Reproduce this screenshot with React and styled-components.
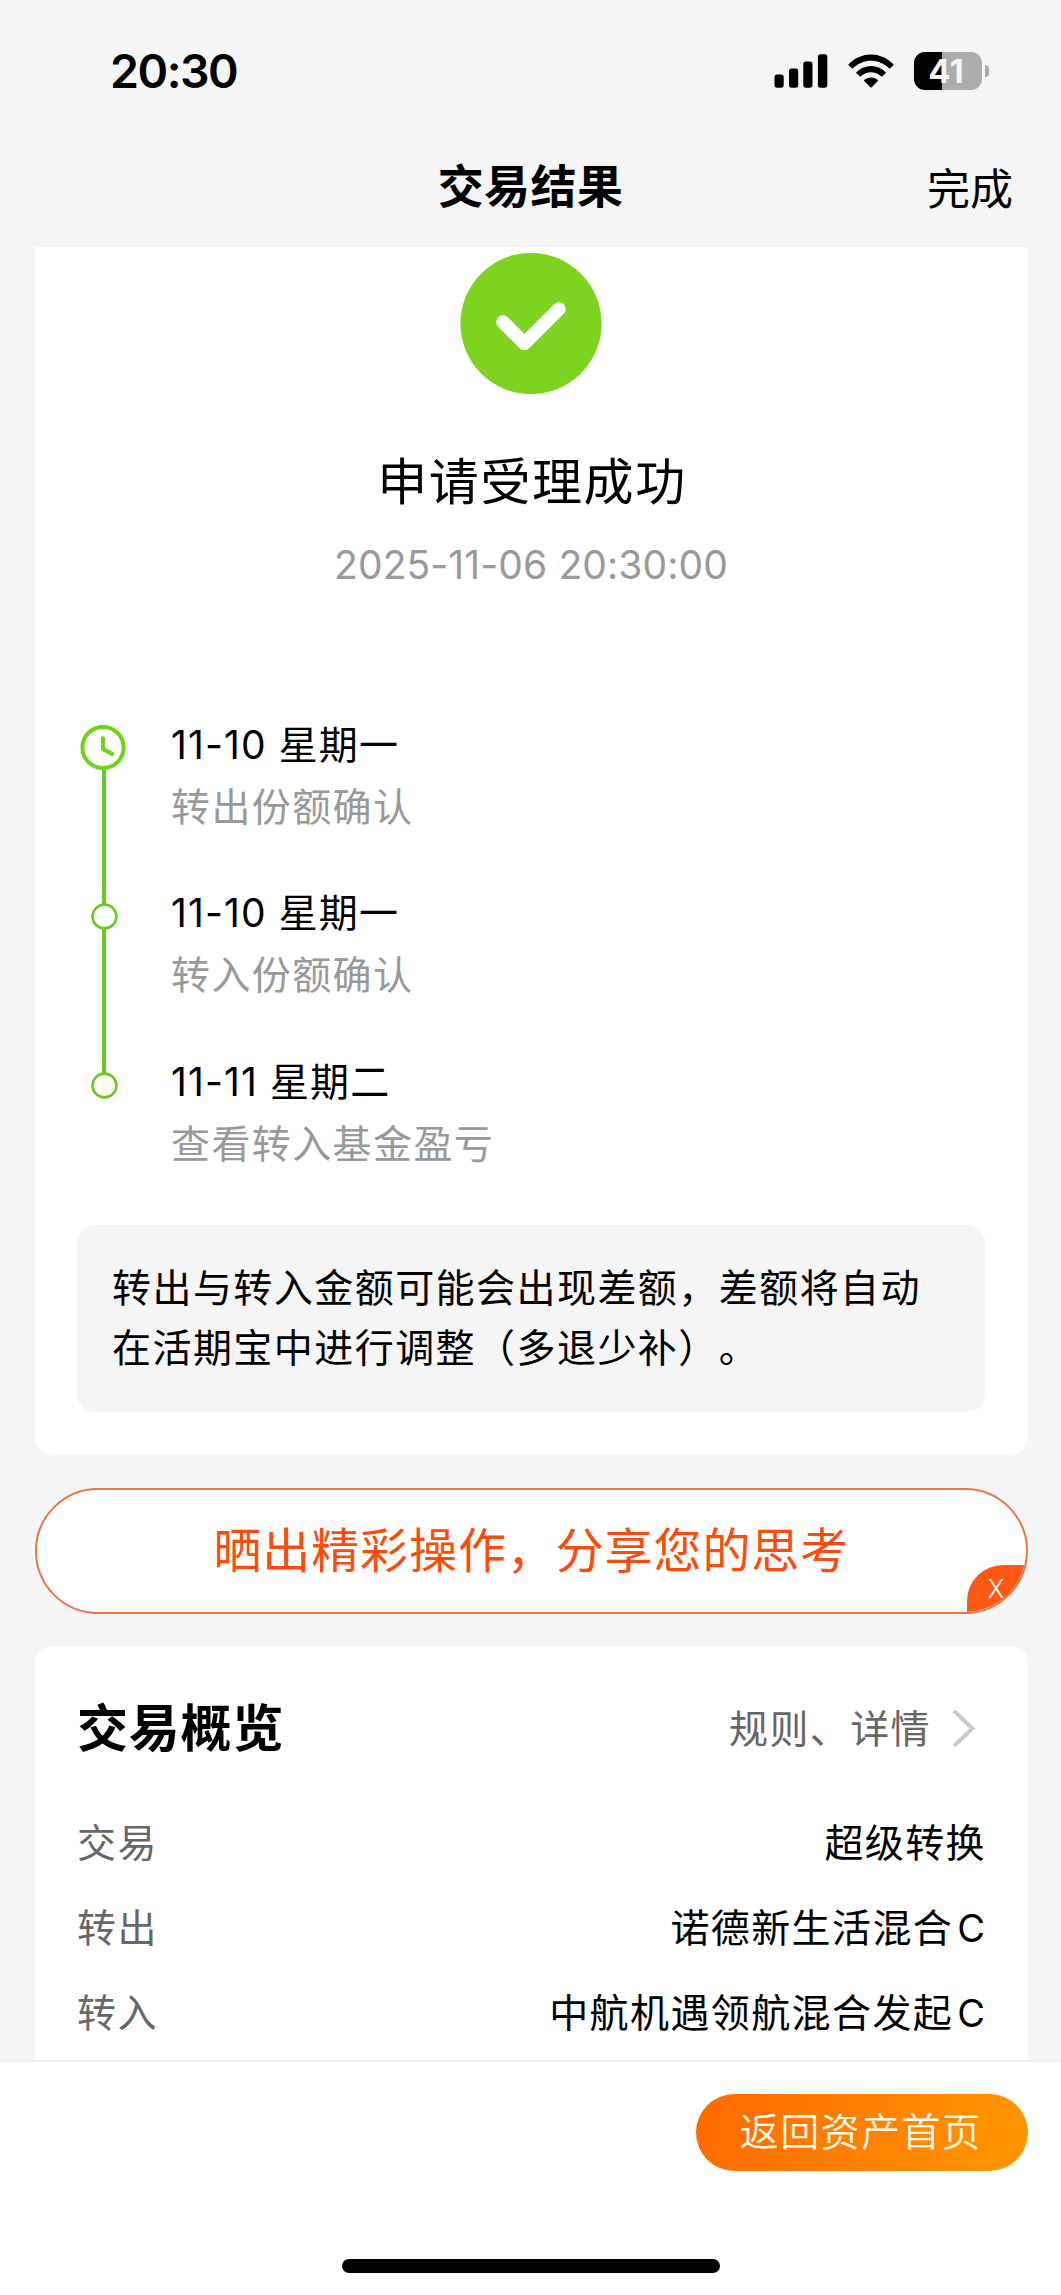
import React from 'react'
import styled, { createGlobalStyle } from 'styled-components'

const steps = [
  { date: '11-10 星期一', text: '转出份额确认', current: true },
  { date: '11-10 星期一', text: '转入份额确认' },
  { date: '11-11 星期二', text: '查看转入基金盈亏' },
];

const details = [
  { label: '交易', value: '超级转换' },
  { label: '转出', value: '诺德新生活混合', suffix: 'C' },
  { label: '转入', value: '中航机遇领航混合发起', suffix: 'C' },
];

const GlobalStyle = createGlobalStyle`
  * {
    box-sizing: border-box;
  }

  body {
    margin: 0;
    background: #f5f5f5;
    color: #000;
    font-family: Inter, "Noto Sans CJK SC", sans-serif;
    font-size: 39px;
    letter-spacing: 1.4px;
    text-spacing-trim: space-all;
    white-space: nowrap;
  }

  svg {
    display: block;
  }

  h1, h2, p {
    margin: 0;
  }
`;

function SignalIcon() {
  return (
    <svg width="54" height="34" viewBox="0 0 54 34">
      <rect x="0.5" y="20.5" width="9.2" height="13.2" rx="2.6" />
      <rect x="15" y="14.5" width="9.2" height="19.2" rx="2.6" />
      <rect x="29.3" y="7.5" width="9.2" height="26.2" rx="2.6" />
      <rect x="43.9" y="0.3" width="9.4" height="33.4" rx="2.6" />
    </svg>
  );
}

function WifiIcon() {
  return (
    <svg width="46" height="34" viewBox="0 0 46 34">
      <path d="M0.6 10.2C13 -2.9 33 -2.9 45.4 10.2Q45.8 10.7 45.4 11.2L42.2 14.3Q41.6 14.8 41 14.3C31 4.3 15 4.3 5 14.3Q4.4 14.8 3.8 14.3L0.6 11.2Q0.2 10.7 0.6 10.2Z" />
      <path d="M8.4 18.2C16.6 9.9 29.4 9.9 37.6 18.2Q38 18.7 37.6 19.2L34.3 22.3Q33.7 22.8 33.1 22.3C27.4 16.9 18.6 16.9 12.9 22.3Q12.3 22.8 11.7 22.3L8.4 19.2Q8 18.7 8.4 18.2Z" />
      <path d="M16.2 26.1C20 22.5 26 22.5 29.8 26.1Q30.2 26.6 29.8 27.1L23.7 33.2Q23 33.8 22.3 33.2L16.2 27.1Q15.8 26.6 16.2 26.1Z" />
    </svg>
  );
}

function CheckIcon() {
  return (
    <svg width="142" height="142" viewBox="0 0 142 142">
      <circle cx="71" cy="70.6" r="70.6" fill="#7ed321" />
      <path d="M43 69L64.4 90.4L99 56" fill="none" stroke="#fff" strokeWidth="13.4" strokeLinecap="round" strokeLinejoin="round" />
    </svg>
  );
}

function ClockIcon() {
  return (
    <svg width="46" height="46" viewBox="0 0 46 46">
      <circle cx="23" cy="22.5" r="20.6" fill="#fff" stroke="#6fd414" strokeWidth="4" />
      <path d="M23 13.3V24.1L32.2 28.9" fill="none" stroke="#6fd414" strokeWidth="4.2" strokeLinecap="round" strokeLinejoin="round" />
    </svg>
  );
}

function DotIcon() {
  return (
    <svg width="27" height="27" viewBox="0 0 27 27">
      <circle cx="13.5" cy="13.5" r="11.9" fill="#fff" stroke="#67ca1c" strokeWidth="2.6" />
    </svg>
  );
}

function App() {
  return (
    <Screen>
      <GlobalStyle />
      <StatusBar>
        <Time>20:30</Time>
        <StatusIcons>
          <SignalIcon />
          <WifiIcon />
          <Battery>
            <BatteryBody>41</BatteryBody>
            <BatteryTip />
          </Battery>
        </StatusIcons>
      </StatusBar>
      <NavBar>
        <span />
        <NavTitle>交易结果</NavTitle>
        <NavAction>完成</NavAction>
      </NavBar>

      <Content>
        <ResultCard>
          <CheckIcon />
          <ResultTitle>申请受理成功</ResultTitle>
          <ResultTime>2025-11-06 20:30:00</ResultTime>
          <Timeline>
            {steps.map((step, i) => (
              <Step key={i}>
                <Rail $current={step.current}>
                  {step.current ? <ClockIcon /> : <DotIcon />}
                  {i < steps.length - 1 && <Line />}
                </Rail>
                <StepBody>
                  <StepDate>{step.date}</StepDate>
                  <StepText>{step.text}</StepText>
                </StepBody>
              </Step>
            ))}
          </Timeline>
          <Notice>
            转出与转入金额可能会出现差额，差额将自动
            <br />
            在活期宝中进行调整（多退少补）。
          </Notice>
        </ResultCard>

        <ShareButton>
          晒出精彩操作，分享您的思考
          <CloseCorner>X</CloseCorner>
        </ShareButton>

        <OverviewCard>
          <OverviewHead>
            <OverviewTitle>交易概览</OverviewTitle>
            <RulesLink>
              规则、详情
              <svg width="24" height="42" viewBox="0 0 24 42">
                <path d="M2 6L20.5 23.5L2 41" fill="none" stroke="#cbcbcb" strokeWidth="4" />
              </svg>
            </RulesLink>
          </OverviewHead>
          {details.map((row) => (
            <DetailRow key={row.label}>
              <DetailLabel>{row.label}</DetailLabel>
              <DetailValue>
                {row.value}
                {row.suffix && <Suffix>{row.suffix}</Suffix>}
              </DetailValue>
            </DetailRow>
          ))}
        </OverviewCard>
      </Content>

      <BottomBar>
        <HomeButton>返回资产首页</HomeButton>
        <HomeIndicator />
      </BottomBar>
    </Screen>
  );
}

const Screen = styled.div`
  display: flex;
  flex-direction: column;
  width: 1061px;
  height: 2295px;
  overflow: hidden;
`;

const StatusBar = styled.div`
  display: flex;
  justify-content: space-between;
  align-items: center;
  height: 141px;
  padding: 0 72px 0 110px;
`;

const Time = styled.span`
  font-size: 46.5px;
  font-weight: 600;
  letter-spacing: -1.5px;
`;

const StatusIcons = styled.div`
  display: flex;
  align-items: center;
  gap: 20px;
`;

const Battery = styled.div`
  display: flex;
  align-items: center;
  gap: 3px;
`;

const BatteryBody = styled.span`
  width: 68px;
  height: 38px;
  padding-right: 4px;
  border-radius: 11px;
  background: linear-gradient(90deg, #000 28px, #acacac 28px);
  color: #f5f5f5;
  font-size: 33px;
  font-weight: 700;
  letter-spacing: 0;
  line-height: 38px;
  text-align: center;
`;

const BatteryTip = styled.span`
  width: 4px;
  height: 12px;
  border-radius: 0 6px 6px 0;
  background: #acacac;
`;

const NavBar = styled.div`
  display: grid;
  grid-template-columns: 1fr auto 1fr;
  align-items: center;
  height: 106px;
  padding: 0 48px 16px;
`;

const NavTitle = styled.h1`
  font-size: 46px;
  font-weight: 700;
  letter-spacing: 0.4px;
  line-height: 60px;
`;

const NavAction = styled.span`
  justify-self: end;
  padding-top: 5px;
  font-size: 43px;
  letter-spacing: 0;
  line-height: 60px;
`;

const Content = styled.main`
  display: flex;
  flex-direction: column;
  height: 1813px;
  padding: 0 33px 0 34.5px;
  overflow: hidden;
`;

const ResultCard = styled.section`
  display: flex;
  flex-direction: column;
  align-items: center;
  flex: none;
  height: 1208px;
  padding: 6px 43px 0 42.5px;
  border-radius: 0 0 17px 17px;
  background: #fff;
`;

const ResultTitle = styled.h2`
  margin-top: 51px;
  padding-left: 2px;
  font-size: 50px;
  font-weight: 400;
  letter-spacing: 1.6px;
  line-height: 72px;
`;

const ResultTime = styled.p`
  margin-top: 17px;
  color: #999;
  font-size: 39px;
  letter-spacing: 0.1px;
  line-height: 60px;
`;

const Timeline = styled.div`
  align-self: stretch;
  height: 500px;
  margin-top: 130px;
`;

const Step = styled.div`
  display: flex;
  height: 168.4px;
`;

const Rail = styled.div`
  display: flex;
  flex-direction: column;
  align-items: center;
  width: 54px;

  svg {
    flex: none;
    margin: ${(props) => (props.$current ? '0 3px 0 0' : '10px 0 0 1px')};
  }
`;

const Line = styled.span`
  flex: 1;
  width: 4px;
  margin-top: -1px;
  margin-bottom: -11px;
  background: #67ca1c;
`;

const StepBody = styled.div`
  margin-left: 40px;
`;

const StepDate = styled.p`
  margin-top: -10px;
  letter-spacing: 1.1px;
  line-height: 60px;
`;

const StepText = styled.p`
  margin-top: 2px;
  color: #999;
  line-height: 60px;
`;

const Notice = styled.div`
  align-self: stretch;
  height: 187px;
  padding: 33px 35px;
  border-radius: 18px;
  background: #f5f5f5;
  letter-spacing: 1.45px;
  line-height: 60px;
`;

const ShareButton = styled.div`
  position: relative;
  flex: none;
  height: 126px;
  margin-top: 33px;
  border: 2px solid #ec7446;
  border-radius: 63px;
  background: #fff;
  color: #fc4c0c;
  font-size: 48px;
  letter-spacing: 0.9px;
  line-height: 122px;
  text-align: center;
  overflow: hidden;
`;

const CloseCorner = styled.span`
  position: absolute;
  right: -2px;
  bottom: -2px;
  width: 61px;
  height: 49px;
  padding-right: 3px;
  border-top-left-radius: 36px;
  background: #fc5a14;
  color: #fff;
  font-size: 25px;
  font-weight: 300;
  letter-spacing: 0;
  line-height: 49px;
`;

const OverviewCard = styled.section`
  flex: none;
  height: 440px;
  margin-top: 32px;
  padding: 38px 43px 0 42.5px;
  border-radius: 17px;
  background: #fff;
`;

const OverviewHead = styled.div`
  display: flex;
  justify-content: space-between;
  align-items: center;
  height: 84px;
  margin-bottom: 29px;
`;

const OverviewTitle = styled.h2`
  margin-top: -2px;
  font-size: 51px;
  font-weight: 700;
  letter-spacing: 0.8px;
`;

const RulesLink = styled.span`
  display: flex;
  align-items: center;
  gap: 21px;
  padding-right: 9px;
  color: #666;
`;

const DetailRow = styled.div`
  display: flex;
  justify-content: space-between;
  align-items: center;
  height: 85.3px;
`;

const DetailLabel = styled.span`
  color: #666;
`;

const DetailValue = styled.span`
  margin-right: -1px;
`;

const Suffix = styled.span`
  margin-left: 4px;
  margin-right: 1px;
  font-size: 38px;
  letter-spacing: 0;
`;

const BottomBar = styled.footer`
  display: flex;
  flex-direction: column;
  align-items: center;
  height: 235px;
  padding: 32px 33px 0;
  border-top: 2px solid #f0f0f0;
  background: #fff;
`;

const HomeButton = styled.span`
  align-self: flex-end;
  width: 332px;
  height: 77px;
  padding-right: 2px;
  border-radius: 39px;
  background: linear-gradient(100deg, #ff6a00, #ff9800);
  color: #fff8ea;
  font-weight: 350;
  line-height: 75px;
  text-align: center;
`;

const HomeIndicator = styled.span`
  width: 378px;
  height: 14px;
  margin-top: 88px;
  border-radius: 7px;
  background: #000;
`;

export default App;
